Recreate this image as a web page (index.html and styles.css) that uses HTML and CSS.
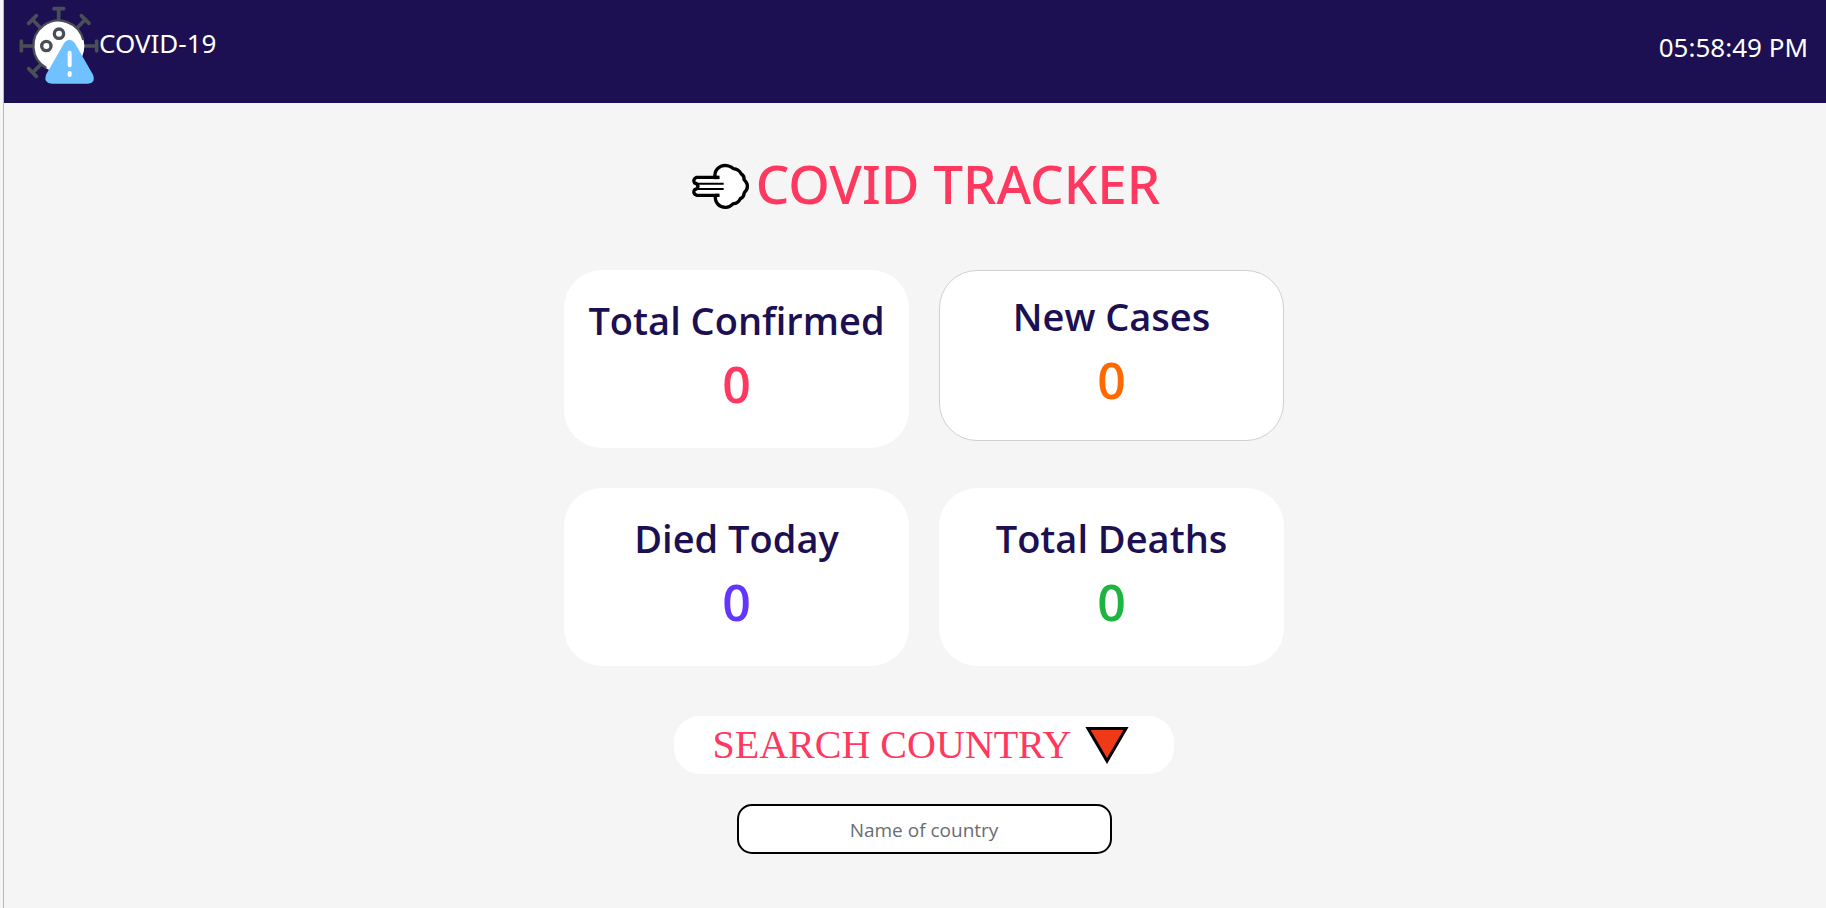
FILE: index.html
```html
<!DOCTYPE html>
<html lang="en">
<head>
<meta charset="utf-8">
<meta name="viewport" content="width=device-width, initial-scale=1">
<title>Covid Tracker</title>
<link rel="stylesheet" href="styles.css">
</head>
<body>
<header class="navbar">
  <a class="brand" href="#">
    <svg class="brand-icon" viewBox="57 15 240 240" aria-hidden="true">
      <g fill="none" stroke="#4a4e57" stroke-width="11" stroke-linecap="round">
        <path d="M176 27V60M162 26H191M64 123V153M66 138H100M290 123V153M250 138H288M86 70L109 47M98 59L122 84M244 47L267 70M255 59L231 84M86 206L109 229M98 218L124 192"/>
      </g>
      <circle cx="176" cy="138" r="77" fill="#fff"/>
      <path d="M250 120A76 76 0 1 0 139 204" fill="none" stroke="#4a4e57" stroke-width="7"/>
      <g fill="#fff" stroke="#4a4e57" stroke-width="10">
        <circle cx="177" cy="101" r="14"/>
        <circle cx="139" cy="138" r="14"/>
      </g>
      <path d="M193 128Q208 110 224 128L279 224Q288 250 262 251H156Q130 250 138 224Z" fill="#70c1ff"/>
      <path d="M209 158V196M209 219V225" stroke="#fff" stroke-width="12" stroke-linecap="round"/>
    </svg>
    <span class="brand-name">COVID-19</span>
  </a>
  <time class="clock">05:58:49 PM</time>
</header>

<main class="tracker">
  <h1 class="title">
    <svg class="title-icon" viewBox="36 18 174 144" aria-hidden="true">
      <path d="M105 65C102 42 118 28 136 28Q151 29 160 38Q176 39 184 54Q194 60 192 73Q203 88 193 106Q194 122 181 128Q174 142 160 143Q148 155 136 154C118 154 104 140 106 117Z" fill="#fff"/>
      <path d="M119 65H50Q38 71 43 81Q54 90 43 100Q39 112 50 118H119V65Z" fill="#fff"/>
      <path d="M118 64L105 65C102 42 118 28 136 28Q151 29 160 38Q176 39 184 54Q194 60 192 71Q203 82 202 91Q203 99 193 110Q191 124 181 128Q174 142 160 143Q148 155 136 154C118 154 104 140 106 118L118 118" fill="none" stroke="#000" stroke-width="10" stroke-linejoin="round"/>
      <path d="M118 64H50Q37 70 44 81Q52 82 54 91Q52 99 44 101Q37 112 50 118H118" fill="none" stroke="#000" stroke-width="10" stroke-linejoin="round"/>
      <path d="M50 83H131M50 99H131" stroke="#000" stroke-width="6"/>
    </svg>
    <span class="title-text">COVID TRACKER</span>
  </h1>

  <section class="stats">
    <article class="card">
      <h2 class="card-title">Total Confirmed</h2>
      <p class="card-value confirmed">0</p>
    </article>
    <article class="card card-active">
      <h2 class="card-title">New Cases</h2>
      <p class="card-value cases">0</p>
    </article>
    <article class="card">
      <h2 class="card-title">Died Today</h2>
      <p class="card-value today">0</p>
    </article>
    <article class="card">
      <h2 class="card-title">Total Deaths</h2>
      <p class="card-value deaths">0</p>
    </article>
  </section>

  <form class="search">
    <label class="search-label" for="country">
      <span>SEARCH COUNTRY</span>
      <svg class="search-icon" viewBox="0 0 44 38" aria-hidden="true">
        <path d="M3 2.500H41L22 35Z" fill="#f03a17" stroke="#000" stroke-width="3"/>
      </svg>
    </label>
    <input class="search-input" id="country" type="text" placeholder="Name of country">
  </form>
</main>
</body>
</html>
```
FILE: styles.css
```css
* {
  box-sizing: border-box;
}

html {
  background: #f5f5f5;
}

body {
  min-height: 100vh;
  margin: 0 0 0 3px;
  border-left: 1px solid #b9b9b9;
  background: #f5f5f5;
  font-family: "Segoe UI", "Open Sans", sans-serif;
}

h1,
h2,
p {
  margin: 0;
}

.navbar {
  display: flex;
  justify-content: space-between;
  padding: 5px 18px 18px 15px;
  background: #1c1052;
  color: #fff;
  font-family: "Comic Sans MS", "Noto Sans", sans-serif;
  font-size: 26px;
  line-height: 36px;
}

.brand {
  display: flex;
  color: inherit;
  text-decoration: none;
}

.brand-icon {
  width: 80px;
  height: 80px;
}

.brand-name {
  padding-top: 20px;
}

.clock {
  padding-top: 24px;
}

.tracker {
  display: flex;
  flex-direction: column;
  align-items: center;
  padding: 48px 0 48px 18px;
}

.title {
  display: flex;
  align-items: center;
  gap: 6px;
  padding-left: 4px;
  color: #ff3860;
  font-family: "Comic Sans MS", "Noto Sans", sans-serif;
  font-size: 53px;
  font-weight: 500;
  line-height: 66px;
}

.title-text {
  padding-bottom: 4px;
}

.title-icon {
  width: 58px;
  height: 48px;
}

.stats {
  display: grid;
  grid-template-columns: repeat(2, 345px);
  align-items: start;
  gap: 40px 30px;
  margin-top: 49px;
}

.card {
  padding: 24px 16px 34px;
  border-radius: 38px;
  background: #fff;
  text-align: center;
}

.card-active {
  padding: 19px 16px 30px;
  border: 1px solid #d0d0d0;
}

.card-title {
  color: #1c1052;
  font-size: 38px;
  font-weight: 600;
  line-height: 52px;
  white-space: nowrap;
}

.card-value {
  margin-top: 8px;
  font-size: 50px;
  font-weight: 600;
  line-height: 60px;
}

.confirmed {
  color: #ff3860;
}

.cases {
  color: #ff6a00;
}

.today {
  color: #6236ff;
}

.deaths {
  color: #1db440;
}

.search {
  display: flex;
  flex-direction: column;
  align-items: center;
  gap: 30px;
  margin-top: 50px;
}

.search-label {
  display: flex;
  justify-content: center;
  align-items: center;
  gap: 14px;
  width: 500px;
  padding: 6px 6px 6px 0;
  border-radius: 26px;
  background: #fff;
  color: #ff3860;
  font-family: "Times New Roman", "Liberation Serif", serif;
  font-size: 40px;
  line-height: 46px;
}

.search-icon {
  width: 44px;
  height: 38px;
}

.search-input {
  width: 375px;
  height: 50px;
  padding: 6px 12px 4px;
  border: 2px solid #000;
  border-radius: 15px;
  background: #fff;
  color: #222;
  font-family: inherit;
  font-size: 19px;
  text-align: center;
}

.search-input::placeholder {
  color: #6a6d72;
}
```
